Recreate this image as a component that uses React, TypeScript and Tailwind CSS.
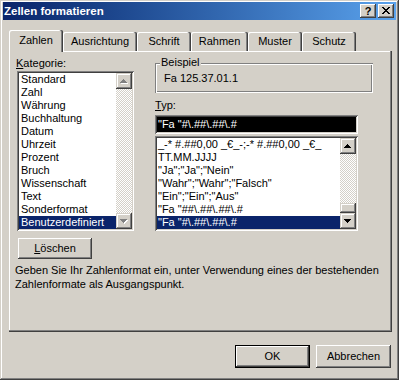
import React from 'react';

type ArrowProps = { dir: 'up' | 'down'; disabled?: boolean };

function ArrowGlyph({ dir, disabled }: ArrowProps) {
  const rows = dir === 'up'
    ? [[3, 0, 1], [2, 1, 3], [1, 2, 5], [0, 3, 7]]
    : [[0, 0, 7], [1, 1, 5], [2, 2, 3], [3, 3, 1]];
  return (
    <svg width="8" height="5" viewBox="0 0 8 5" shapeRendering="crispEdges">
      {disabled && rows.map(([x, y, w], i) => (
        <rect key={'w' + i} x={x + 1} y={y + 1} width={w} height={1} fill="#ffffff" />
      ))}
      {rows.map(([x, y, w], i) => (
        <rect key={i} x={x} y={y} width={w} height={1} fill={disabled ? '#808080' : '#000000'} />
      ))}
    </svg>
  );
}

function ScrollBtn({ dir, disabled }: ArrowProps) {
  return (
    <div className="w-[16px] h-[16px] shrink-0 bg-[#d4d0c8] flex items-center justify-center shadow-[inset_-1px_-1px_0_#404040,inset_1px_1px_0_#d4d0c8,inset_-2px_-2px_0_#808080,inset_2px_2px_0_#ffffff]">
      <ArrowGlyph dir={dir} disabled={disabled} />
    </div>
  );
}

function ScrollBar({ disabled, thumb }: { disabled?: boolean; thumb?: boolean }) {
  return (
    <div className="w-[16px] shrink-0 flex flex-col">
      <ScrollBtn dir="up" disabled={disabled} />
      <div className="flex-1 bg-[image:repeating-conic-gradient(#ffffff_0_25%,#d4d0c8_0_50%)] bg-[length:2px_2px]" />
      {thumb && (
        <div className="h-[10px] shrink-0 bg-[#d4d0c8] shadow-[inset_-1px_-1px_0_#404040,inset_1px_1px_0_#d4d0c8,inset_-2px_-2px_0_#808080,inset_2px_2px_0_#ffffff]" />
      )}
      <ScrollBtn dir="down" disabled={disabled} />
    </div>
  );
}

function Item({ text, selected, pad }: { text: string; selected?: boolean; pad: 'wide' | 'narrow' }) {
  const base = pad === 'wide' ? 'h-[13px] leading-[13px] pl-[2px] whitespace-nowrap' : 'h-[13px] leading-[13px] pl-[1px] whitespace-nowrap';
  return (
    <div className={selected ? base + ' bg-[#0a246a] text-white' : base}>{text}</div>
  );
}

const categories = [
  'Standard', 'Zahl', 'Währung', 'Buchhaltung', 'Datum', 'Uhrzeit', 'Prozent', 'Bruch',
  'Wissenschaft', 'Text', 'Sonderformat', 'Benutzerdefiniert',
];

const types = [
  '_-* #.##0,00 _€_-;-* #.##0,00 _€_',
  'TT.MM.JJJJ',
  '"Ja";"Ja";"Nein"',
  '"Wahr";"Wahr";"Falsch"',
  '"Ein";"Ein";"Aus"',
  '"Fa "##\\.##\\.##\\.#',
  '"Fa "#\\.##\\.##\\.#',
];

const tabs = [
  { label: 'Ausrichtung', w: 'w-[74px]' },
  { label: 'Schrift', w: 'w-[54px]' },
  { label: 'Rahmen', w: 'w-[57px]' },
  { label: 'Muster', w: 'w-[54px]' },
  { label: 'Schutz', w: 'w-[54px]' },
];

function PushButton({ children, isDefault }: { children: React.ReactNode; isDefault?: boolean }) {
  if (isDefault) {
    return (
      <div className="w-[75px] h-[23px] border border-black">
        <div className="w-full h-full bg-[#d4d0c8] flex items-center justify-center shadow-[inset_-1px_-1px_0_#404040,inset_1px_1px_0_#ffffff,inset_-2px_-2px_0_#808080]">
          {children}
        </div>
      </div>
    );
  }
  return (
    <div className="w-[75px] h-[23px] bg-[#d4d0c8] flex items-center justify-center shadow-[inset_-1px_-1px_0_#404040,inset_1px_1px_0_#ffffff,inset_-2px_-2px_0_#808080]">
      {children}
    </div>
  );
}

export default function App() {
  return (
    <div className="w-[399px] h-[380px] bg-[#d4d0c8] pt-[2px] px-[3px] text-[11px] leading-[13px] text-black font-['Liberation_Sans',Arial,sans-serif] shadow-[inset_-1px_-1px_0_#404040,inset_1px_1px_0_#d4d0c8,inset_-2px_-2px_0_#808080,inset_2px_2px_0_#ffffff] overflow-hidden">
      {/* Title bar */}
      <div className="h-[18px] flex items-center bg-linear-to-r from-[#0a246a] to-[#5aa2ec] pl-[1px] pr-[2px]">
        <div className="flex-1 text-white font-bold text-[11.5px] leading-[13px] whitespace-nowrap">Zellen formatieren</div>
        <div className="flex gap-[2px]">
          <div className="w-[16px] h-[14px] bg-[#d4d0c8] flex items-center justify-center font-bold text-[11px] leading-[11px] shadow-[inset_-1px_-1px_0_#404040,inset_1px_1px_0_#ffffff,inset_-2px_-2px_0_#808080]">?</div>
          <div className="w-[16px] h-[14px] bg-[#d4d0c8] flex items-center justify-center shadow-[inset_-1px_-1px_0_#404040,inset_1px_1px_0_#ffffff,inset_-2px_-2px_0_#808080]">
            <svg width="8" height="7" viewBox="0 0 8 7" shapeRendering="crispEdges" className="mt-[-1px]">
              <path d="M0 0h2v1H0zM6 0h2v1H6zM1 1h2v1H1zM5 1h2v1H5zM2 2h4v1H2zM3 3h2v1H3zM2 4h4v1H2zM1 5h2v1H1zM5 5h2v1H5zM0 6h2v1H0zM6 6h2v1H6z" fill="#000" />
            </svg>
          </div>
        </div>
      </div>

      <div className="ml-[6px] w-[383px]">
        {/* Tabs */}
        <div className="mt-[10px] h-[21px] flex items-end">
          <div className="relative z-10 w-[54px] h-[22px] mb-[-1px] bg-[#d4d0c8] flex justify-center pt-[4px] shadow-[inset_-1px_0_0_#404040,inset_-2px_0_0_#808080,inset_1px_1px_0_#ffffff] rounded-t-[2px]">
            Zahlen
          </div>
          {tabs.map((t) => (
            <div
              key={t.label}
              className={t.w + ' h-[19px] bg-[#d4d0c8] flex justify-center pt-[3px] shadow-[inset_-1px_0_0_#404040,inset_-2px_0_0_#808080,inset_1px_1px_0_#ffffff] rounded-t-[2px]'}
            >
              {t.label}
            </div>
          ))}
        </div>

        {/* Panel */}
        <div className="h-[281px] pl-[7px] pt-[6px] shadow-[inset_-1px_-1px_0_#404040,inset_-2px_-2px_0_#808080,inset_1px_1px_0_#ffffff]">
          <div className="flex items-start">
            {/* Left column */}
            <div className="w-[139px] shrink-0">
              <div className="h-[13px]"><span className="underline">K</span>ategorie:</div>
              <div className="mt-[1px] ml-[1px] w-[117px] h-[160px] bg-white p-[2px] flex shadow-[inset_1px_1px_0_#808080,inset_-1px_-1px_0_#ffffff,inset_2px_2px_0_#404040,inset_-2px_-2px_0_#d4d0c8]">
                <div className="flex-1 overflow-hidden">
                  {categories.map((c, i) => (
                    <Item key={c} text={c} pad="wide" selected={i === categories.length - 1} />
                  ))}
                </div>
                <ScrollBar disabled />
              </div>
            </div>

            {/* Right column */}
            <div className="w-[218px]">
              <div className="relative mt-[6px] h-[30px] w-[218px] shadow-[inset_1px_1px_0_#808080,inset_2px_2px_0_#ffffff,inset_-1px_-1px_0_#ffffff,inset_-2px_-2px_0_#808080] pt-[9px] pl-[9px]">
                <span className="absolute left-[5px] top-[-7px] px-[1px] bg-[#d4d0c8]">Beispiel</span>
                Fa 125.37.01.1
              </div>
              <div className="mt-[6px] h-[13px]"><span className="underline">T</span>yp:</div>
              <div className="mt-[3px] w-[203px] h-[19px] p-[2px] flex shadow-[inset_1px_1px_0_#808080,inset_-1px_-1px_0_#ffffff,inset_2px_2px_0_#404040,inset_-2px_-2px_0_#d4d0c8] bg-white">
                <div className="flex-1 bg-black text-white pl-[1px] pt-[1px] whitespace-nowrap overflow-hidden">{'"Fa "#\\.##\\.##\\.#'}</div>
              </div>
              <div className="mt-[2px] w-[203px] h-[95px] bg-white p-[2px] flex shadow-[inset_1px_1px_0_#808080,inset_-1px_-1px_0_#ffffff,inset_2px_2px_0_#404040,inset_-2px_-2px_0_#d4d0c8]">
                <div className="flex-1 overflow-hidden">
                  {types.map((t, i) => (
                    <Item key={t} text={t} pad="narrow" selected={i === types.length - 1} />
                  ))}
                </div>
                <ScrollBar thumb />
              </div>
            </div>
          </div>

          <div className="mt-[7px] ml-[2px] w-[74px] h-[21px] bg-[#d4d0c8] flex items-center justify-center shadow-[inset_-1px_-1px_0_#404040,inset_1px_1px_0_#ffffff,inset_-2px_-2px_0_#808080]">
            <span><span className="underline">L</span>öschen</span>
          </div>

          <div className="mt-[4px] ml-[-1px] leading-[14px] whitespace-nowrap">
            Geben Sie Ihr Zahlenformat ein, unter Verwendung eines der bestehenden
            <br />
            Zahlenformate als Ausgangspunkt.
          </div>
        </div>

        {/* Bottom buttons */}
        <div className="mt-[13px] flex justify-end gap-[6px] pr-[1px]">
          <PushButton isDefault>OK</PushButton>
          <PushButton>Abbrechen</PushButton>
        </div>
      </div>
    </div>
  );
}
